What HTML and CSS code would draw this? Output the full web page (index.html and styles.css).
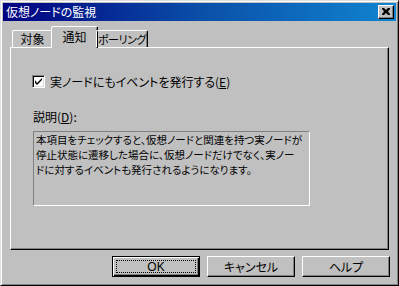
FILE: index.html
```html
<!DOCTYPE html>
<html>
<head>
  <title>仮想ノードの監視</title>
  <link rel="stylesheet" href="styles.css">
</head>
<body>

<div class="window">
  <div class="titlebar">
    <span class="title">仮想ノードの監視</span>
    <span class="close-btn">
      <svg width="8" height="7" viewBox="0 0 8 7"><path d="M0 0h2l2 2 2-2h2v1l-2 2.5 2 2.5v1h-2l-2-2-2 2h-2v-1l2-2.5-2-2.5z" fill="#000"/></svg>
    </span>
  </div>

  <div class="content">
    <div class="tabs">
      <div class="tab tab-first">対象</div>
      <div class="tab tab-active">通知</div>
      <div class="tab tab-last">ポーリング</div>
    </div>

    <div class="panel">
      <label class="check-row">
        <span class="checkbox">
          <svg width="7" height="7" viewBox="0 0 7 7"><path d="M0 2v3l2 2 5-5v-2l-5 5z" fill="#000"/></svg>
        </span>
        <span>実ノードにもイベントを発行する(<u>E</u>)</span>
      </label>

      <div class="desc-label">説明(<u>D</u>):</div>
      <div class="desc-box">本項目をチェックすると、仮想ノードと関連を持つ実ノードが<br>停止状態に遷移した場合に、仮想ノードだけでなく、実ノー<br>ドに対するイベントも発行されるようになります。</div>
    </div>

    <div class="buttons">
      <div class="btn btn-default"><span class="focus">OK</span></div>
      <div class="btn">キャンセル</div>
      <div class="btn">ヘルプ</div>
    </div>
  </div>
</div>

</body>
</html>
```

FILE: styles.css
```css
body {
  margin: 0;
  font-family: "Noto Sans CJK JP", "Liberation Sans", sans-serif;
  font-size: 12px;
  font-feature-settings: "palt";
  color: #000;
  background: #c0c0c0;
}

/* Window frame */
.window {
  width: 399px;
  height: 286px;
  box-sizing: border-box;
  background: #c0c0c0;
  border: 1px solid;
  border-color: #dfdfdf #000 #000 #dfdfdf;
  box-shadow: inset 1px 1px #fff, inset -1px -1px #808080;
  padding: 2px;
}

/* Title bar */
.titlebar {
  height: 18px;
  background: linear-gradient(to right, #000080, #0a4fa8 50%, #1084d0);
  display: flex;
  align-items: center;
  justify-content: space-between;
  padding: 0 2px 0 3px;
}

.title {
  color: #fff;
  font-size: 12px;
  line-height: 18px;
}

.close-btn {
  width: 16px;
  height: 14px;
  box-sizing: border-box;
  background: #c0c0c0;
  border: 1px solid;
  border-color: #fff #000 #000 #fff;
  box-shadow: inset -1px -1px #808080;
  display: flex;
  align-items: center;
  justify-content: center;
  padding: 0 1px 1px 0;
}

.content {
  padding: 5px 7px 0 7px;
}

/* Tabs */
.tabs {
  display: flex;
  align-items: flex-end;
  height: 21px;
  padding-left: 2px;
  position: relative;
  z-index: 1;
}

.tab {
  height: 17px;
  box-sizing: border-box;
  border-top: 1px solid #fff;
  border-left: 1px solid #fff;
  border-right: 1px solid #000;
  border-radius: 2px 2px 0 0;
  box-shadow: inset -1px 0 #808080;
  line-height: 16px;
  text-align: center;
  white-space: nowrap;
}

.tab-first {
  width: 41px;
}

.tab-active {
  width: 47px;
  height: 22px;
  margin: 0 -2px -1px -2px;
  background: #c0c0c0;
  line-height: 19px;
}

.tab-last {
  width: 52px;
  font-size: 11px;
  letter-spacing: -0.4px;
}

/* Panel */
.panel {
  height: 203px;
  box-sizing: border-box;
  border: 1px solid;
  border-color: #fff #000 #000 #fff;
  box-shadow: inset -1px -1px #808080;
  padding: 26px 0 0 21px;
}

.check-row {
  display: flex;
  align-items: center;
  gap: 5px;
  height: 14px;
}

.checkbox {
  width: 13px;
  height: 13px;
  box-sizing: border-box;
  background: #fff;
  border: 1px solid;
  border-color: #808080 #fff #fff #808080;
  box-shadow: inset 1px 1px #000, inset -1px -1px #dfdfdf;
  display: flex;
  align-items: center;
  justify-content: center;
}

.desc-label {
  margin-top: 22px;
  margin-left: 1px;
  line-height: 14px;
}

.desc-box {
  margin-top: 7px;
  margin-left: 1px;
  width: 277px;
  height: 75px;
  box-sizing: border-box;
  border: 1px solid;
  border-color: #808080 #fff #fff #808080;
  padding: 0 2px;
  font-size: 10.5px;
  line-height: 15px;
  white-space: nowrap;
}

/* Buttons */
.buttons {
  display: flex;
  justify-content: flex-end;
  gap: 7px;
  padding-top: 6px;
  margin-right: -1px;
}

.btn {
  width: 88px;
  height: 21px;
  box-sizing: border-box;
  border: 1px solid;
  border-color: #fff #000 #000 #fff;
  box-shadow: inset -1px -1px #808080;
  display: flex;
  align-items: center;
  justify-content: center;
}

.btn-default {
  border: 1px solid #000;
  box-shadow: inset 1px 1px #fff, inset -1px -1px #000, inset -2px -2px #808080;
  padding: 3px;
}

.focus {
  flex: 1;
  align-self: stretch;
  border: 1px dotted #000;
  display: flex;
  align-items: center;
  justify-content: center;
  font-family: "Liberation Sans", sans-serif;
}
```
